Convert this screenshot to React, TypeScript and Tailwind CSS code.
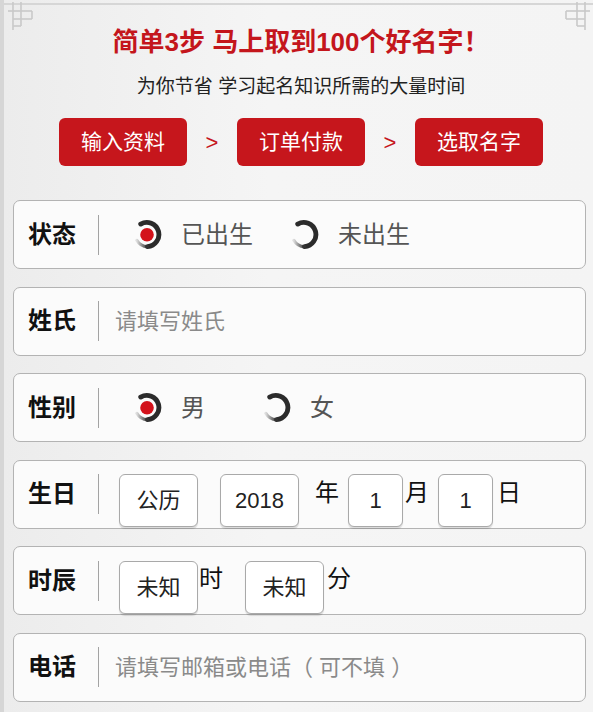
const FONT = "font-['Liberation_Sans','Noto_Sans_CJK_SC',sans-serif]";

function InkRadio({ checked }: { checked: boolean }) {
  return (
    <svg width="31" height="31" viewBox="0 0 32 32" className="shrink-0">
      <defs>
        <linearGradient id="tail" x1="1" y1="0" x2="0" y2="0">
          <stop offset="0" stopColor="#333" />
          <stop offset="1" stopColor="#333" stopOpacity="0.15" />
        </linearGradient>
      </defs>
      {/* brush arc, thick on the right side */}
      <path d="M9 5.2 A12.5 12.5 0 1 1 16 28.5" fill="none" stroke="#2b2b2b" strokeWidth="5" strokeLinecap="round" />
      <path d="M16 28.5 A12.5 12.5 0 0 1 5 22" fill="none" stroke="url(#tail)" strokeWidth="3.2" strokeLinecap="round" />
      {checked && <circle cx="15.5" cy="16.2" r="7" fill="#d3121b" />}
    </svg>
  );
}

function Radio({ label, checked, width }: { label: string; checked: boolean; width?: string }) {
  return (
    <div className={`flex items-center gap-[18px] ${width ?? ''}`}>
      <InkRadio checked={checked} />
      <span className="text-[24px] leading-none text-[#555]">{label}</span>
    </div>
  );
}

function SelectBox({ value, w = 'w-[79px]' }: { value: string; w?: string }) {
  return (
    <div className={`flex h-[53px] ${w} shrink-0 items-center justify-center rounded-[6px] border border-[#a9a9a9] bg-white text-[22px] text-[#222] shadow-[0_2px_1px_rgba(0,0,0,0.12)]`}>
      {value}
    </div>
  );
}

function Row({ label, children }: { label: string; children: React.ReactNode }) {
  return (
    <div className="flex h-[69px] items-center rounded-[7px] border-[1.5px] border-[#b3b3b3] bg-[#fbfbfb] pl-[14px]">
      <span className="w-[70px] shrink-0 text-[24px] font-bold leading-none text-[#111]">{label}</span>
      <span className="h-[40px] w-px shrink-0 bg-[#a3a3a3]" />
      {children}
    </div>
  );
}

function Corner({ flip }: { flip?: boolean }) {
  return (
    <svg width="30" height="30" viewBox="0 0 30 30" className={flip ? '-scale-x-100' : ''}>
      <g fill="none" stroke="#c9c9c9" strokeWidth="1.6">
        <path d="M8 0 V28" />
        <path d="M16 0 V24" />
        <path d="M3 9 H27" />
        <path d="M8 17 H27" />
        <path d="M27 9 V17" />
        <path d="M8 24 H16" />
      </g>
    </svg>
  );
}

export default function App() {
  return (
    <div className={`relative h-[712px] w-[593px] overflow-hidden border-l-[4px] border-[#d6d6d6] bg-[linear-gradient(90deg,#ececec,#f5f5f5_45%,#f4f4f4)] ${FONT}`}>
      {/* top frame line and lattice corners */}
      <div className="mt-[3px] h-[2px] bg-[#d6d6d6]" />
      <div className="absolute left-[1px] top-[2px]">
        <Corner />
      </div>
      <div className="absolute right-0 top-[2px]">
        <Corner flip />
      </div>

      <div className="flex flex-col items-center pl-[5px]">
        <h1 className="mt-[22px] h-[31px] text-[26px] font-bold leading-[31px] text-[#c4161c]">
          简单3步 马上取到100个好名字<span className="font-['Noto_Sans_CJK_SC',sans-serif] leading-none">！</span>
        </h1>
        <p className="mt-[17px] text-[19px] leading-[24px] text-[#222]">为你节省 学习起名知识所需的大量时间</p>
        <div className="mt-[19px] flex items-center">
          <div className="flex h-[48px] w-[128px] items-center justify-center rounded-[6px] bg-[#c6161c] text-[21px] text-white">输入资料</div>
          <span className="w-[50px] text-center text-[22px] text-[#c6161c]">&gt;</span>
          <div className="flex h-[48px] w-[128px] items-center justify-center rounded-[6px] bg-[#c6161c] text-[21px] text-white">订单付款</div>
          <span className="w-[50px] text-center text-[22px] text-[#c6161c]">&gt;</span>
          <div className="flex h-[48px] w-[128px] items-center justify-center rounded-[6px] bg-[#c6161c] text-[21px] text-white">选取名字</div>
        </div>
      </div>

      <div className="mt-[34px] flex flex-col gap-[17.6px] pl-[9px] pr-[7px]">
        <Row label="状态">
          <div className="ml-[33px] flex items-center">
            <Radio label="已出生" checked width="w-[157px]" />
            <Radio label="未出生" checked={false} />
          </div>
        </Row>

        <Row label="姓氏">
          <span className="ml-[16px] text-[22px] text-[#8a8a8a]">请填写姓氏</span>
        </Row>

        <Row label="性别">
          <div className="ml-[33px] flex items-center">
            <Radio label="男" checked width="w-[129px]" />
            <Radio label="女" checked={false} />
          </div>
        </Row>

        <Row label="生日">
          <div className="ml-[20px] flex items-center self-stretch pt-[13px] text-[24px] text-[#111]">
            <SelectBox value="公历" />
            <SelectBox value="2018" w="ml-[22px] w-[79px]" />
            <span className="mb-[16px] ml-[16px] mr-[9px] leading-[30px]">年</span>
            <SelectBox value="1" w="w-[55px]" />
            <span className="mb-[16px] ml-[2px] mr-[9px] leading-[30px]">月</span>
            <SelectBox value="1" w="w-[55px]" />
            <span className="mb-[16px] ml-[4px] leading-[30px]">日</span>
          </div>
        </Row>

        <Row label="时辰">
          <div className="ml-[20px] flex items-center self-stretch pt-[13px] text-[24px] text-[#111]">
            <SelectBox value="未知" />
            <span className="mb-[16px] ml-[1px] mr-[22px] leading-[30px]">时</span>
            <SelectBox value="未知" />
            <span className="mb-[16px] ml-[3px] leading-[30px]">分</span>
          </div>
        </Row>

        <Row label="电话">
          <span className="ml-[16px] text-[22px] text-[#8a8a8a]">请填写邮箱或电话（ 可不填 ）</span>
        </Row>
      </div>
    </div>
  );
}
